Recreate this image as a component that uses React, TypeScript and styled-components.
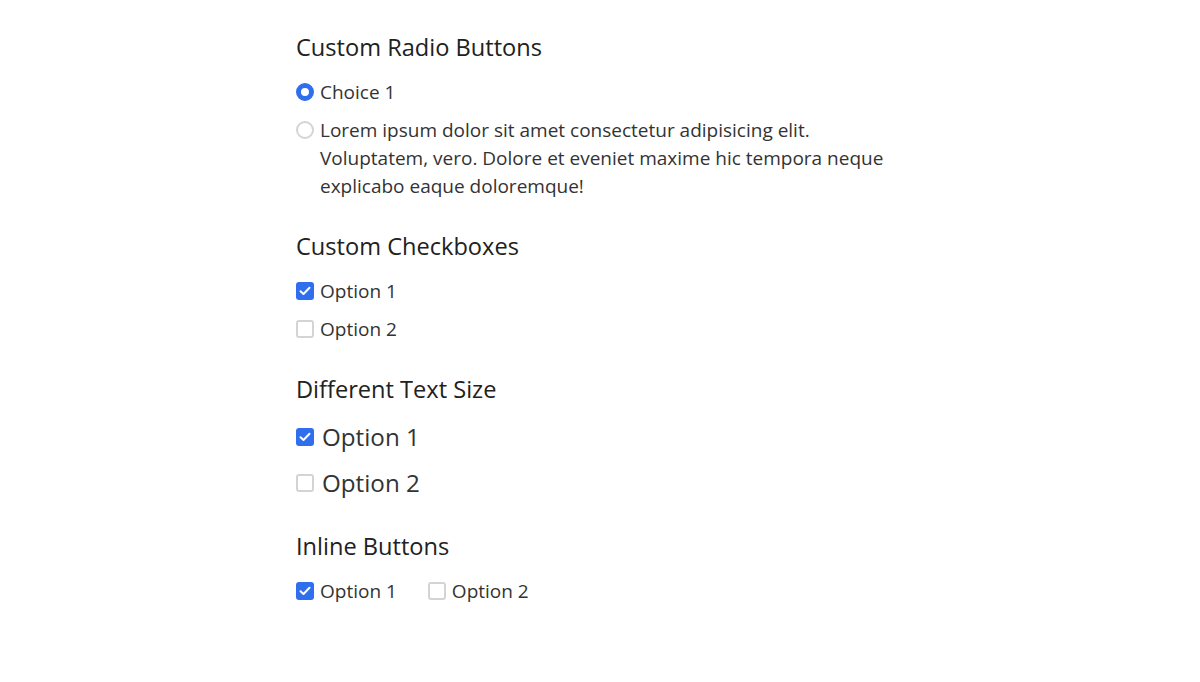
import React from "react";
import styled, { createGlobalStyle } from "styled-components";

const GlobalStyle = createGlobalStyle`
  html, body {
    margin: 0;
    padding: 0;
    background: #ffffff;
  }

  body {
    font-family: "Open Sans", "Noto Sans", "Liberation Sans", sans-serif;
    color: #333333;
  }
`;

type SizeType = "normal" | "large";

const sizes = {
  normal: { font: 19, line: 28, gap: 10 },
  large: { font: 24.2, line: 34, gap: 12 },
};

const Page = styled.main`
  width: 608px;
  margin: 0 auto;
  padding-top: 31px;
`;

const Section = styled.section`
  margin-bottom: 30px;
`;

const Title = styled.h2`
  margin: 0 0 15px;
  font-size: 23.6px;
  line-height: 32px;
  font-weight: 400;
  color: #212121;
`;

const List = styled.div<{ $size: SizeType; $inline?: boolean }>`
  display: flex;
  flex-direction: ${(p) => (p.$inline ? "row" : "column")};
  gap: ${(p) => (p.$inline ? "31px" : `${sizes[p.$size].gap}px`)};
`;

const Label = styled.label<{ $size: SizeType }>`
  display: flex;
  align-items: flex-start;
  gap: ${(p) => (p.$size === "large" ? "8px" : "6px")};
  font-size: ${(p) => sizes[p.$size].font}px;
  line-height: ${(p) => sizes[p.$size].line}px;
  cursor: pointer;
`;

const Box = styled.span<{ $size: SizeType; $checked: boolean; $round?: boolean }>`
  flex: none;
  box-sizing: border-box;
  width: 18px;
  height: 18px;
  margin-top: ${(p) => (sizes[p.$size].line - 18) / 2}px;
  border-radius: ${(p) => (p.$round ? "50%" : "3px")};
  border: ${(p) =>
    p.$checked
      ? p.$round
        ? "5px solid #2f6fed"
        : "none"
      : "2px solid #d4d4d4"};
  background: ${(p) => (p.$checked && !p.$round ? "#2f6fed" : "#ffffff")};
  display: flex;
  align-items: center;
  justify-content: center;
`;

const Text = styled.span`
  color: #333333;
`;

const CheckMark = () => (
  <svg width="12" height="10" viewBox="0 0 12 10" fill="none">
    <path
      d="M1.5 5.2 L4.5 8 L10.5 1.8"
      stroke="#ffffff"
      strokeWidth="2"
      strokeLinecap="round"
      strokeLinejoin="round"
    />
  </svg>
);

type ChoiceProps = {
  label: string;
  checked?: boolean;
  round?: boolean;
  size?: SizeType;
};

const Choice: React.FC<ChoiceProps> = ({ label, checked = false, round, size = "normal" }) => (
  <Label $size={size}>
    <Box $size={size} $checked={checked} $round={round}>
      {checked && !round && <CheckMark />}
    </Box>
    <Text>{label}</Text>
  </Label>
);

const App: React.FC = () => {
  return (
    <>
      <GlobalStyle />
      <Page>
        <Section>
          <Title>Custom Radio Buttons</Title>
          <List $size="normal">
            <Choice label="Choice 1" checked round />
            <Choice
              round
              label="Lorem ipsum dolor sit amet consectetur adipisicing elit. Voluptatem, vero. Dolore et eveniet maxime hic tempora neque explicabo eaque doloremque!"
            />
          </List>
        </Section>

        <Section>
          <Title>Custom Checkboxes</Title>
          <List $size="normal">
            <Choice label="Option 1" checked />
            <Choice label="Option 2" />
          </List>
        </Section>

        <Section>
          <Title>Different Text Size</Title>
          <List $size="large">
            <Choice label="Option 1" checked size="large" />
            <Choice label="Option 2" size="large" />
          </List>
        </Section>

        <Section>
          <Title>Inline Buttons</Title>
          <List $size="normal" $inline>
            <Choice label="Option 1" checked />
            <Choice label="Option 2" />
          </List>
        </Section>
      </Page>
    </>
  );
};

export default App;
